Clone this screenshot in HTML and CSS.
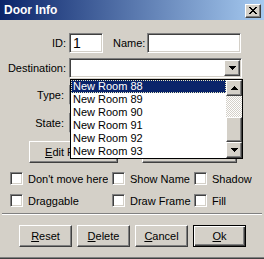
FILE: index.html
```html
<!DOCTYPE html>
<html lang="en">
<head>
  <meta charset="UTF-8" />
  <title>Door Info</title>
  <link rel="stylesheet" href="styles.css">
</head>
<body>
  <div class="window">
    <div class="titlebar">
      <span class="title">Door Info</span>
      <button class="btn close-btn" aria-label="Close">
        <svg width="8" height="7" viewBox="0 0 8 7" shape-rendering="crispEdges"><path d="M0 0h2v1H0zM6 0h2v1H6zM1 1h2v1H1zM5 1h2v1H5zM2 2h4v1H2zM3 3h2v1H3zM2 4h4v1H2zM1 5h2v1H1zM5 5h2v1H5zM0 6h2v1H0zM6 6h2v1H6z" fill="#000"/></svg>
      </button>
    </div>

    <div class="content">
      <div class="row">
        <label class="lbl">ID:</label>
        <div class="sunken id-field">1</div>
        <label class="name-lbl">Name:</label>
        <div class="sunken name-field"></div>
      </div>

      <div class="row dest-row">
        <label class="lbl">Destination:</label>
        <div class="sunken combo">
          <span class="combo-text"></span>
          <span class="btn arrow-btn">
            <svg width="7" height="4" viewBox="0 0 7 4" shape-rendering="crispEdges"><path d="M0 0h7v1H0zM1 1h5v1H1zM2 2h3v1H2zM3 3h1v1H3z" fill="#000"/></svg>
          </span>
        </div>
      </div>

      <div class="row type-row">
        <label class="lbl lbl-short">Type:</label>
        <div class="sunken combo"><span class="combo-text"></span><span class="btn arrow-btn"></span></div>
      </div>

      <div class="row state-row">
        <label class="lbl lbl-short">State:</label>
        <div class="sunken combo"><span class="combo-text"></span><span class="btn arrow-btn"></span></div>
      </div>

      <div class="edit-row">
        <button class="btn edit-btn"><u>E</u>dit Rooms</button>
        <button class="btn edit-btn wide">Edit <u>S</u>tates</button>
      </div>

      <div class="checks">
        <div class="check"><span class="checkbox"></span><span class="check-text">Don't move here</span></div>
        <div class="check"><span class="checkbox"></span><span class="check-text">Show Name</span></div>
        <div class="check"><span class="checkbox"></span><span class="check-text">Shadow</span></div>
        <div class="check"><span class="checkbox"></span><span class="check-text">Draggable</span></div>
        <div class="check"><span class="checkbox"></span><span class="check-text">Draw Frame</span></div>
        <div class="check"><span class="checkbox"></span><span class="check-text">Fill</span></div>
      </div>

      <div class="separator"></div>

      <div class="actions">
        <button class="btn action-btn"><u>R</u>eset</button>
        <button class="btn action-btn"><u>D</u>elete</button>
        <button class="btn action-btn"><u>C</u>ancel</button>
        <button class="btn action-btn default"><u>O</u>k</button>
      </div>
    </div>

    <!-- open dropdown of the Destination combo -->
    <div class="dropdown-list">
      <ul class="items">
        <li class="item selected">New Room 88</li>
        <li class="item">New Room 89</li>
        <li class="item">New Room 90</li>
        <li class="item">New Room 91</li>
        <li class="item">New Room 92</li>
        <li class="item">New Room 93</li>
      </ul>
      <div class="scrollbar">
        <span class="btn scroll-btn">
          <svg width="7" height="4" viewBox="0 0 7 4" shape-rendering="crispEdges"><path d="M3 0h1v1H3zM2 1h3v1H2zM1 2h5v1H1zM0 3h7v1H0z" fill="#000"/></svg>
        </span>
        <span class="track"></span>
        <span class="btn thumb"></span>
        <span class="btn scroll-btn">
          <svg width="7" height="4" viewBox="0 0 7 4" shape-rendering="crispEdges"><path d="M0 0h7v1H0zM1 1h5v1H1zM2 2h3v1H2zM3 3h1v1H3z" fill="#000"/></svg>
        </span>
      </div>
    </div>
  </div>
</body>
</html>
```

FILE: styles.css
```css
* {
  box-sizing: border-box;
}

body {
  margin: 0;
  font-family: 'Liberation Sans', Arial, sans-serif;
  font-size: 11px;
  color: #000;
  background: #d4d0c8;
}

.window {
  position: relative;
  width: 264px;
  height: 259px;
  background: #d4d0c8;
  border-bottom: 1px solid #404040;
  box-shadow: inset 0 -1px #808080;
}

.titlebar {
  height: 20px;
  display: flex;
  align-items: center;
  justify-content: space-between;
  padding: 0 3px 0 4px;
  background: linear-gradient(90deg, #0a246a, #a6caf0);
}

.title {
  color: #fff;
  font-weight: bold;
  font-size: 12px;
}

/* raised 3d look shared by all buttons */
.btn {
  background: #d4d0c8;
  border: 1px solid;
  border-color: #fff #404040 #404040 #fff;
  box-shadow: inset -1px -1px #808080;
  padding: 0;
  font: inherit;
  color: #000;
  display: flex;
  align-items: center;
  justify-content: center;
}

.close-btn {
  width: 16px;
  height: 14px;
  margin-top: 1px;
}

.sunken {
  background: #fff;
  border: 1px solid;
  border-color: #808080 #fff #fff #808080;
  box-shadow: inset 1px 1px #404040, inset -1px -1px #d4d0c8;
  padding: 1px;
  height: 20px;
}

.content {
  padding-top: 13px;
}

.row {
  display: flex;
  align-items: center;
  height: 20px;
}

.lbl {
  width: 67px;
  text-align: right;
  padding-right: 1px;
  margin-right: 2px;
}

.lbl-short {
  padding-right: 3px;
}

.id-field {
  width: 34px;
  padding-left: 3px;
  font-size: 14px;
  line-height: 16px;
}

.name-lbl {
  margin-left: 10px;
  width: 34px;
}

.name-field {
  width: 94px;
}

.dest-row {
  margin-top: 5px;
}

.type-row {
  margin-top: 7px;
}

.state-row {
  margin-top: 8px;
}

.combo {
  width: 173px;
  display: flex;
}

.combo-text {
  flex: 1;
}

.arrow-btn {
  width: 16px;
  height: 16px;
}

.edit-row {
  display: flex;
  gap: 24px;
  margin: 8px 0 0 29px;
}

.edit-btn {
  width: 89px;
  height: 22px;
}

.edit-btn.wide {
  width: 95px;
}

.checks {
  display: grid;
  grid-template-columns: 102px 82px 1fr;
  row-gap: 9px;
  margin-top: 9px;
  padding-left: 10px;
}

.check {
  display: flex;
  align-items: center;
  height: 13px;
  gap: 5px;
  overflow: hidden;
  white-space: nowrap;
}

.checkbox {
  flex: none;
  width: 13px;
  height: 13px;
  background: #fff;
  border: 1px solid;
  border-color: #808080 #fff #fff #808080;
  box-shadow: inset 1px 1px #404040, inset -1px -1px #d4d0c8;
}

.check-text {
  overflow: hidden;
}

.separator {
  margin: 6px 2px 0 2px;
  height: 2px;
  border-top: 1px solid #808080;
  border-bottom: 1px solid #fff;
}

.actions {
  display: flex;
  gap: 5px;
  margin: 10px 0 0 19px;
}

.action-btn {
  width: 53px;
  height: 22px;
}

.action-btn.default {
  border: 1px solid #000;
  box-shadow: inset 1px 1px #fff, inset -1px -1px #404040, inset -2px -2px #808080;
}

.dropdown-list {
  position: absolute;
  left: 70px;
  top: 79px;
  width: 173px;
  height: 80px;
  border: 1px solid #000;
  background: #fff;
  display: flex;
}

.items {
  flex: 1;
  list-style: none;
  margin: 0;
  padding: 0;
}

.item {
  height: 13px;
  line-height: 13px;
  padding-left: 2px;
  white-space: nowrap;
}

.item.selected {
  background: #0a246a;
  color: #fff;
  outline: 1px dotted #e8e8c0;
  outline-offset: -1px;
}

.scrollbar {
  width: 16px;
  display: flex;
  flex-direction: column;
}

.scroll-btn {
  height: 16px;
  flex: none;
}

.track {
  height: 21px;
  background: repeating-conic-gradient(#fff 0 25%, #d4d0c8 0 50%) 0 0 / 2px 2px;
}

.thumb {
  height: 25px;
}
```
